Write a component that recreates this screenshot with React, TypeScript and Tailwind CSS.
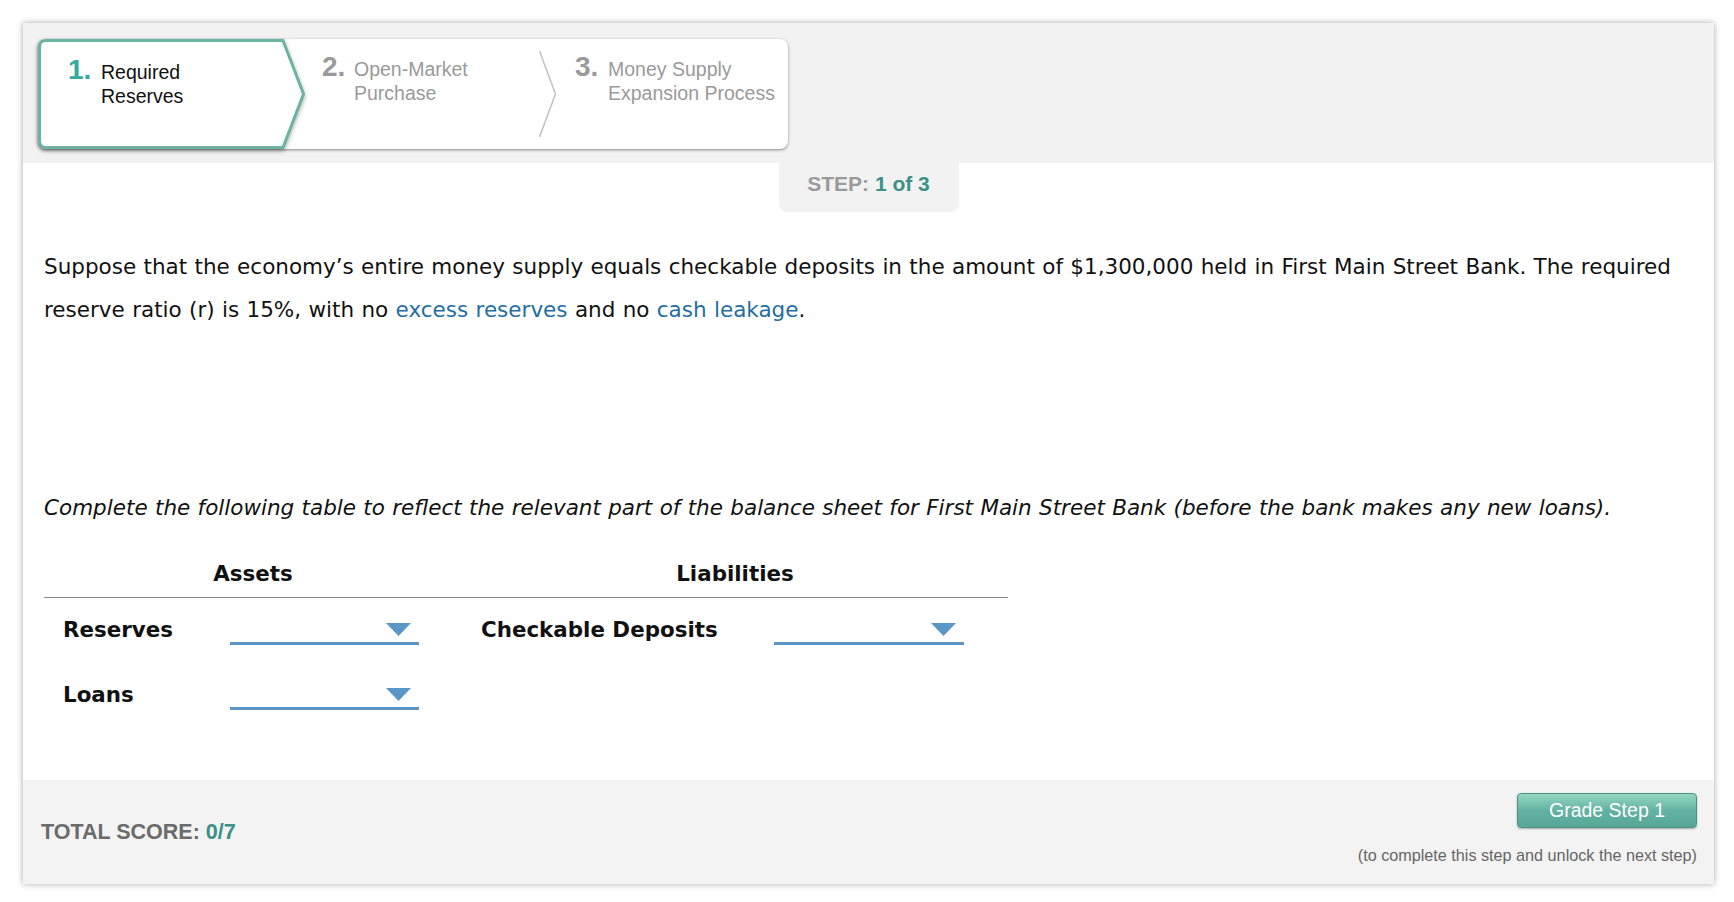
import React from "react";

const ARIAL = "font-['Liberation_Sans',Arial,sans-serif]";
const VERDANA = "font-['DejaVu_Sans',Verdana,sans-serif]";

function Dropdown({ w }: { w: string }) {
  return (
    <div className={`${w} mt-[23px] h-[24px] border-b-[3px] border-[#5b97c6] flex justify-end items-start pr-[8px] pt-[2px]`}>
      <svg width="25" height="13" viewBox="0 0 25 13">
        <polygon points="0,0 25,0 12.5,13" fill="#5b97c6" />
      </svg>
    </div>
  );
}

export default function App() {
  return (
    <div className="w-[1734px] h-[902px] bg-white p-[23px]">
      <div className="w-[1691px] h-[861px] bg-white shadow-[0_0_6px_rgba(0,0,0,0.35)] flex flex-col">
        {/* header */}
        <div className="h-[140px] bg-[#f2f2f2] pt-[16px] pl-[15px]">
          <div className={`w-[750px] h-[110px] bg-white rounded-[8px] shadow-[0_1px_3px_rgba(0,0,0,0.45)] flex ${ARIAL}`}>
            {/* tab 1 */}
            <div className="relative w-[267px] h-[110px] pl-[30px] pt-[17px]">
              <svg
                className="absolute left-0 top-0 drop-shadow-[0_2px_2px_rgba(0,0,0,0.35)]"
                width="267"
                height="110"
                viewBox="0 0 267 110"
              >
                <path
                  d="M8 1.5 L245 1.5 L265.5 55 L245 108.5 L8 108.5 Q1.5 108.5 1.5 102 L1.5 8 Q1.5 1.5 8 1.5 Z"
                  fill="#ffffff"
                  stroke="#6cb3a2"
                  strokeWidth="3"
                  strokeLinejoin="round"
                />
              </svg>
              <div className="relative flex items-baseline">
                <span className="w-[33px] text-[28px] leading-none font-bold text-[#35a99b]">1.</span>
                <div className="text-[19.5px] leading-[24px] text-[#111]">
                  <div>Required</div>
                  <div>Reserves</div>
                </div>
              </div>
            </div>
            {/* tab 2 */}
            <div className="w-[252px] h-[110px] flex">
              <div className="flex-1 pl-[17px] pt-[14px]">
                <div className="flex items-baseline">
                  <span className="w-[32px] text-[28px] leading-none font-bold text-[#9a9a9a]">2.</span>
                  <div className="text-[19.5px] leading-[24px] text-[#9a9a9a]">
                    <div>Open-Market</div>
                    <div>Purchase</div>
                  </div>
                </div>
              </div>
              <svg className="self-center" width="18" height="86" viewBox="0 0 18 86">
                <polyline points="0.5,0 16.5,43 0.5,86" fill="none" stroke="#c4c4c4" strokeWidth="1.6" />
              </svg>
            </div>
            {/* tab 3 */}
            <div className="flex-1 h-[110px] pl-[18px] pt-[14px]">
              <div className="flex items-baseline">
                <span className="w-[33px] text-[28px] leading-none font-bold text-[#9a9a9a]">3.</span>
                <div className="text-[19.5px] leading-[24px] text-[#9a9a9a]">
                  <div>Money Supply</div>
                  <div>Expansion Process</div>
                </div>
              </div>
            </div>
          </div>
        </div>

        {/* body */}
        <div className="flex-1 flex flex-col px-[21px]">
          <div className={`self-center w-[180px] h-[49px] bg-[#f2f2f2] rounded-b-[8px] pt-[8px] text-center text-[21px] leading-[25px] font-bold ${ARIAL}`}>
            <span className="text-[#9a9a9a]">STEP: </span>
            <span className="text-[#3a9188]">1 of 3</span>
          </div>

          <p className={`mt-[33px] text-[21.5px] leading-[43px] [word-spacing:0.5px] text-[#111] ${VERDANA}`}>
            Suppose that the economy’s entire money supply equals checkable deposits in the amount of $1,300,000 held in First Main Street Bank. The required reserve ratio (r) is 15%, with no{" "}
            <span className="text-[#1f6ea3]">excess reserves</span> and no{" "}
            <span className="text-[#1f6ea3]">cash leakage</span>.
          </p>

          <p className={`mt-[155px] text-[21.5px] leading-[43px] [word-spacing:0.5px] italic text-[#111] ${VERDANA}`}>
            Complete the following table to reflect the relevant part of the balance sheet for First Main Street Bank (before the bank makes any new loans).
          </p>

          <div className={`mt-[23px] w-[964px] text-[21.4px] font-bold text-[#111] ${VERDANA}`}>
            <div className="flex h-[46px] border-b border-[#8a8a8a] items-center">
              <div className="w-[418px] text-center">Assets</div>
              <div className="w-[546px] text-center">Liabilities</div>
            </div>
            <div className="flex h-[65px]">
              <div className="w-[418px] flex items-start">
                <div className="w-[186px] pl-[19px] h-[64px] flex items-center">Reserves</div>
                <Dropdown w="w-[189px]" />
              </div>
              <div className="w-[546px] flex items-start">
                <div className="w-[312px] pl-[19px] h-[64px] flex items-center">Checkable Deposits</div>
                <Dropdown w="w-[190px]" />
              </div>
            </div>
            <div className="flex h-[64px]">
              <div className="w-[418px] flex items-start">
                <div className="w-[186px] pl-[19px] h-[64px] flex items-center">Loans</div>
                <Dropdown w="w-[189px]" />
              </div>
            </div>
          </div>
        </div>

        {/* footer */}
        <div className={`h-[104px] bg-[#f3f3f3] flex justify-between items-start pl-[18px] pr-[17px] ${ARIAL}`}>
          <div className="pt-[40px] text-[21.5px] leading-[24px] font-bold">
            <span className="text-[#6b6b6b]">TOTAL SCORE: </span>
            <span className="text-[#3b9087]">0/7</span>
          </div>
          <div className="pt-[13px] flex flex-col items-end">
            <button className="w-[180px] h-[35px] rounded-[4px] border border-[#4d9286] bg-gradient-to-b from-[#94d7c2] via-[#63b2a2] to-[#57a797] text-white text-[19.5px] leading-none shadow-[0_1px_2px_rgba(0,0,0,0.3)]">
              Grade Step 1
            </button>
            <div className="mt-[17px] text-[16.2px] leading-[20px] text-[#666]">
              (to complete this step and unlock the next step)
            </div>
          </div>
        </div>
      </div>
    </div>
  );
}
